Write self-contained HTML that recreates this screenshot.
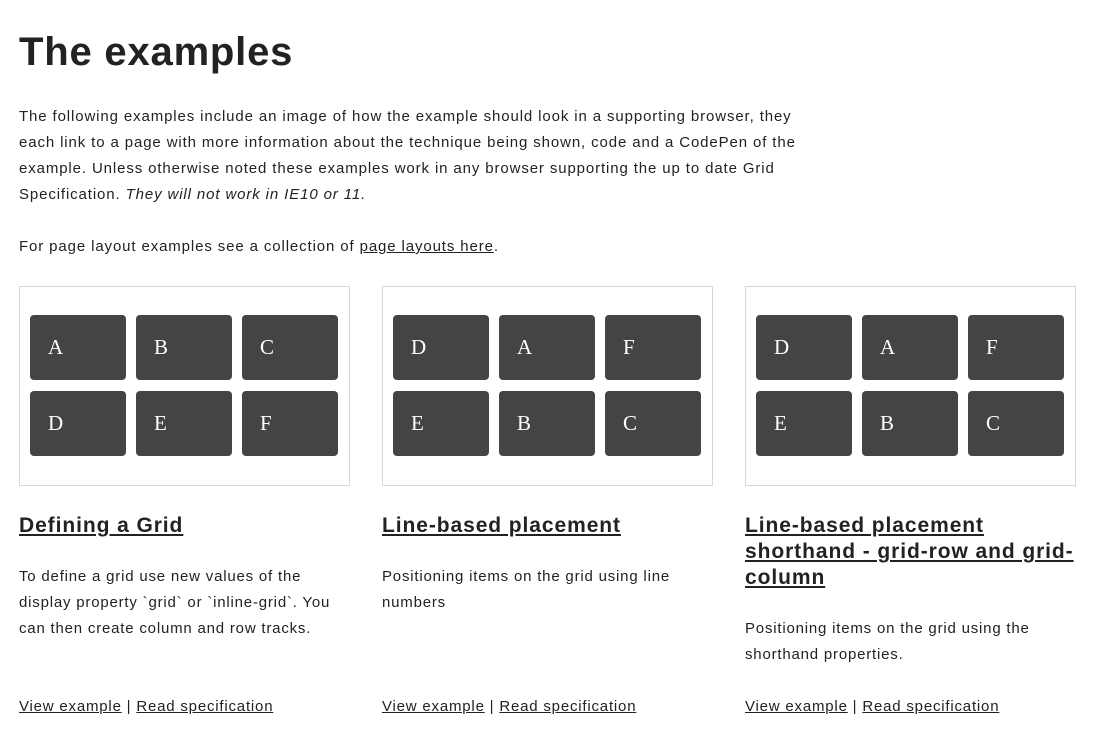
<!DOCTYPE html>
<html><head><style>
body{margin:0;background:#fff;color:#222;font-family:"Liberation Sans",sans-serif;width:1096px;height:740px;overflow:hidden;position:relative}
h1{position:absolute;left:19px;top:27px;margin:0;font-size:40px;font-weight:bold;line-height:50px;color:#222;letter-spacing:0.8px}
.p{position:absolute;left:19px;margin:0;font-size:15px;line-height:26px;white-space:nowrap;color:#222;letter-spacing:0.88px}
a{color:#222;text-decoration:underline}
.col{position:absolute;top:286px;width:330px}
.card{box-sizing:border-box;width:331px;height:200px;border:1px solid #d8d8d8;position:relative}
.b{position:absolute;width:96px;height:65px;background:#444;border-radius:4px;color:#fff;font-family:"Liberation Serif",serif;font-size:21px;line-height:65px;padding-left:18px;box-sizing:border-box}
.t{position:absolute;top:227px;left:0;font-size:21px;font-weight:bold;line-height:26px;margin:0;white-space:nowrap;letter-spacing:0.92px}
.d{position:absolute;left:0;font-size:15px;line-height:26px;margin:0;white-space:nowrap;letter-spacing:0.8px}
.l{position:absolute;top:408px;left:0;font-size:15px;line-height:26px;white-space:nowrap;letter-spacing:0.8px}
</style></head><body>
<h1>The examples</h1>
<p class="p" style="top:104px">The following examples include an image of how the example should look in a supporting browser, they<br>each link to a page with more information about the technique being shown, code and a CodePen of the<br>example. Unless otherwise noted these examples work in any browser supporting the up to date Grid<br>Specification. <i>They will not work in IE10 or 11.</i></p>
<p class="p" style="top:234px">For page layout examples see a collection of <a>page layouts here</a>.</p>

<div class="col" style="left:19px">
<div class="card">
<div class="b" style="left:10px;top:28px">A</div><div class="b" style="left:116px;top:28px">B</div><div class="b" style="left:222px;top:28px">C</div>
<div class="b" style="left:10px;top:104px">D</div><div class="b" style="left:116px;top:104px">E</div><div class="b" style="left:222px;top:104px">F</div>
</div>
<p class="t"><a>Defining a Grid</a></p>
<p class="d" style="top:278px">To define a grid use new values of the<br>display property `grid` or `inline-grid`. You<br>can then create column and row tracks.</p>
<div class="l"><a>View example</a> | <a>Read specification</a></div>
</div>

<div class="col" style="left:382px">
<div class="card">
<div class="b" style="left:10px;top:28px">D</div><div class="b" style="left:116px;top:28px">A</div><div class="b" style="left:222px;top:28px">F</div>
<div class="b" style="left:10px;top:104px">E</div><div class="b" style="left:116px;top:104px">B</div><div class="b" style="left:222px;top:104px">C</div>
</div>
<p class="t"><a>Line-based placement</a></p>
<p class="d" style="top:278px">Positioning items on the grid using line<br>numbers</p>
<div class="l"><a>View example</a> | <a>Read specification</a></div>
</div>

<div class="col" style="left:745px">
<div class="card">
<div class="b" style="left:10px;top:28px">D</div><div class="b" style="left:116px;top:28px">A</div><div class="b" style="left:222px;top:28px">F</div>
<div class="b" style="left:10px;top:104px">E</div><div class="b" style="left:116px;top:104px">B</div><div class="b" style="left:222px;top:104px">C</div>
</div>
<p class="t"><a>Line-based placement<br>shorthand - grid-row and grid-<br>column</a></p>
<p class="d" style="top:330px">Positioning items on the grid using the<br>shorthand properties.</p>
<div class="l"><a>View example</a> | <a>Read specification</a></div>
</div>
</body></html>
